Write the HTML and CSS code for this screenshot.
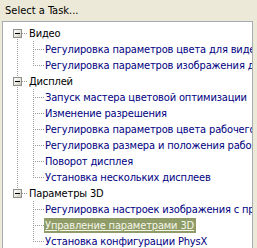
FILE: index.html
```html
<!DOCTYPE html>
<html lang="ru">

<head>
  <meta charset="UTF-8">
  <meta name="viewport" content="width=device-width, initial-scale=1.0">
  <title>Select a Task</title>
  <link rel="stylesheet" href="styles.css">
</head>

<body>

  <div class="panel">
    <div class="title">Select a Task...</div>

    <!-- task tree -->
    <div class="tree">
      <ul class="roots">
        <li class="group">
          <div class="node"><span class="toggle"></span><span class="tick"></span><span class="label">Видео</span></div>
          <ul class="leaves">
            <li class="leaf"><span class="tick"></span><span class="label">Регулировка параметров цвета для видео</span></li>
            <li class="leaf"><span class="tick"></span><span class="label">Регулировка параметров изображения для видео</span></li>
          </ul>
        </li>
        <li class="group">
          <div class="node"><span class="toggle"></span><span class="tick"></span><span class="label">Дисплей</span></div>
          <ul class="leaves">
            <li class="leaf"><span class="tick"></span><span class="label">Запуск мастера цветовой оптимизации</span></li>
            <li class="leaf"><span class="tick"></span><span class="label">Изменение разрешения</span></li>
            <li class="leaf"><span class="tick"></span><span class="label">Регулировка параметров цвета рабочего стола</span></li>
            <li class="leaf"><span class="tick"></span><span class="label">Регулировка размера и положения рабочего стола</span></li>
            <li class="leaf"><span class="tick"></span><span class="label">Поворот дисплея</span></li>
            <li class="leaf"><span class="tick"></span><span class="label">Установка нескольких дисплеев</span></li>
          </ul>
        </li>
        <li class="group">
          <div class="node"><span class="toggle"></span><span class="tick"></span><span class="label">Параметры 3D</span></div>
          <ul class="leaves">
            <li class="leaf"><span class="tick"></span><span class="label">Регулировка настроек изображения с просмотром</span></li>
            <li class="leaf"><span class="tick"></span><span class="label selected">Управление параметрами 3D</span></li>
            <li class="leaf"><span class="tick"></span><span class="label">Установка конфигурации PhysX</span></li>
          </ul>
        </li>
      </ul>
    </div>
  </div>

</body>

</html>
```

FILE: styles.css
```css
body {
  margin: 0;
  padding: 0;
  background-color: #ece9d8;
  font-family: "DejaVu Sans Condensed", "Liberation Sans", sans-serif;
  font-size: 11px;
  color: #000;
}

.panel {
  width: 257px;
  height: 248px;
  overflow: hidden;
}

.title {
  height: 21px;
  line-height: 22px;
  padding-left: 5px;
}

.tree {
  margin-left: 2px;
  width: 249px;
  height: 240px;
  padding-top: 3px;
  background-color: #fff;
  border: 1px solid #a5acb2;
  overflow: hidden;
  white-space: nowrap;
  letter-spacing: -0.15px;
}

ul {
  list-style: none;
  margin: 0;
  padding: 0;
}

/* vertical dotted line between the groups */
.group {
  background-image: repeating-linear-gradient(to bottom, #9a9a9a 0 1px, transparent 1px 2px);
  background-repeat: no-repeat;
  background-size: 1px 100%;
  background-position: 14px 0;
}

.group:first-child {
  background-position: 14px 8px;
}

.group:last-child {
  background-size: 1px 8px;
}

.node,
.leaf {
  display: flex;
  align-items: center;
  height: 16px;
}

.node {
  padding-left: 10px;
}

.toggle {
  position: relative;
  width: 9px;
  height: 9px;
  box-sizing: border-box;
  border: 1px solid #8d8d8d;
  background: linear-gradient(135deg, #fff 0%, #e4e2d8 60%, #c9c6b8 100%);
}

/* minus sign */
.toggle::after {
  content: "";
  position: absolute;
  left: 1px;
  top: 3px;
  width: 5px;
  height: 1px;
  background-color: #000;
}

.tick {
  height: 1px;
  background-image: repeating-linear-gradient(to right, #9a9a9a 0 1px, transparent 1px 2px);
}

.node .tick {
  width: 5px;
}

.node .label {
  margin-left: 2px;
}

.leaves {
  margin-left: 30px;
  background-image: repeating-linear-gradient(to bottom, #9a9a9a 0 1px, transparent 1px 2px);
  background-repeat: no-repeat;
  background-size: 1px calc(100% - 8px);
  background-position: 0 0;
}

.leaf .tick {
  width: 11px;
  flex: none;
}

.leaf .label {
  color: #00007f;
  padding: 0 2px 0 1px;
  line-height: 15px;
}

.leaf .label.selected {
  background-color: #8f9c68;
  color: #f6f6ea;
  text-decoration: underline;
}
```
